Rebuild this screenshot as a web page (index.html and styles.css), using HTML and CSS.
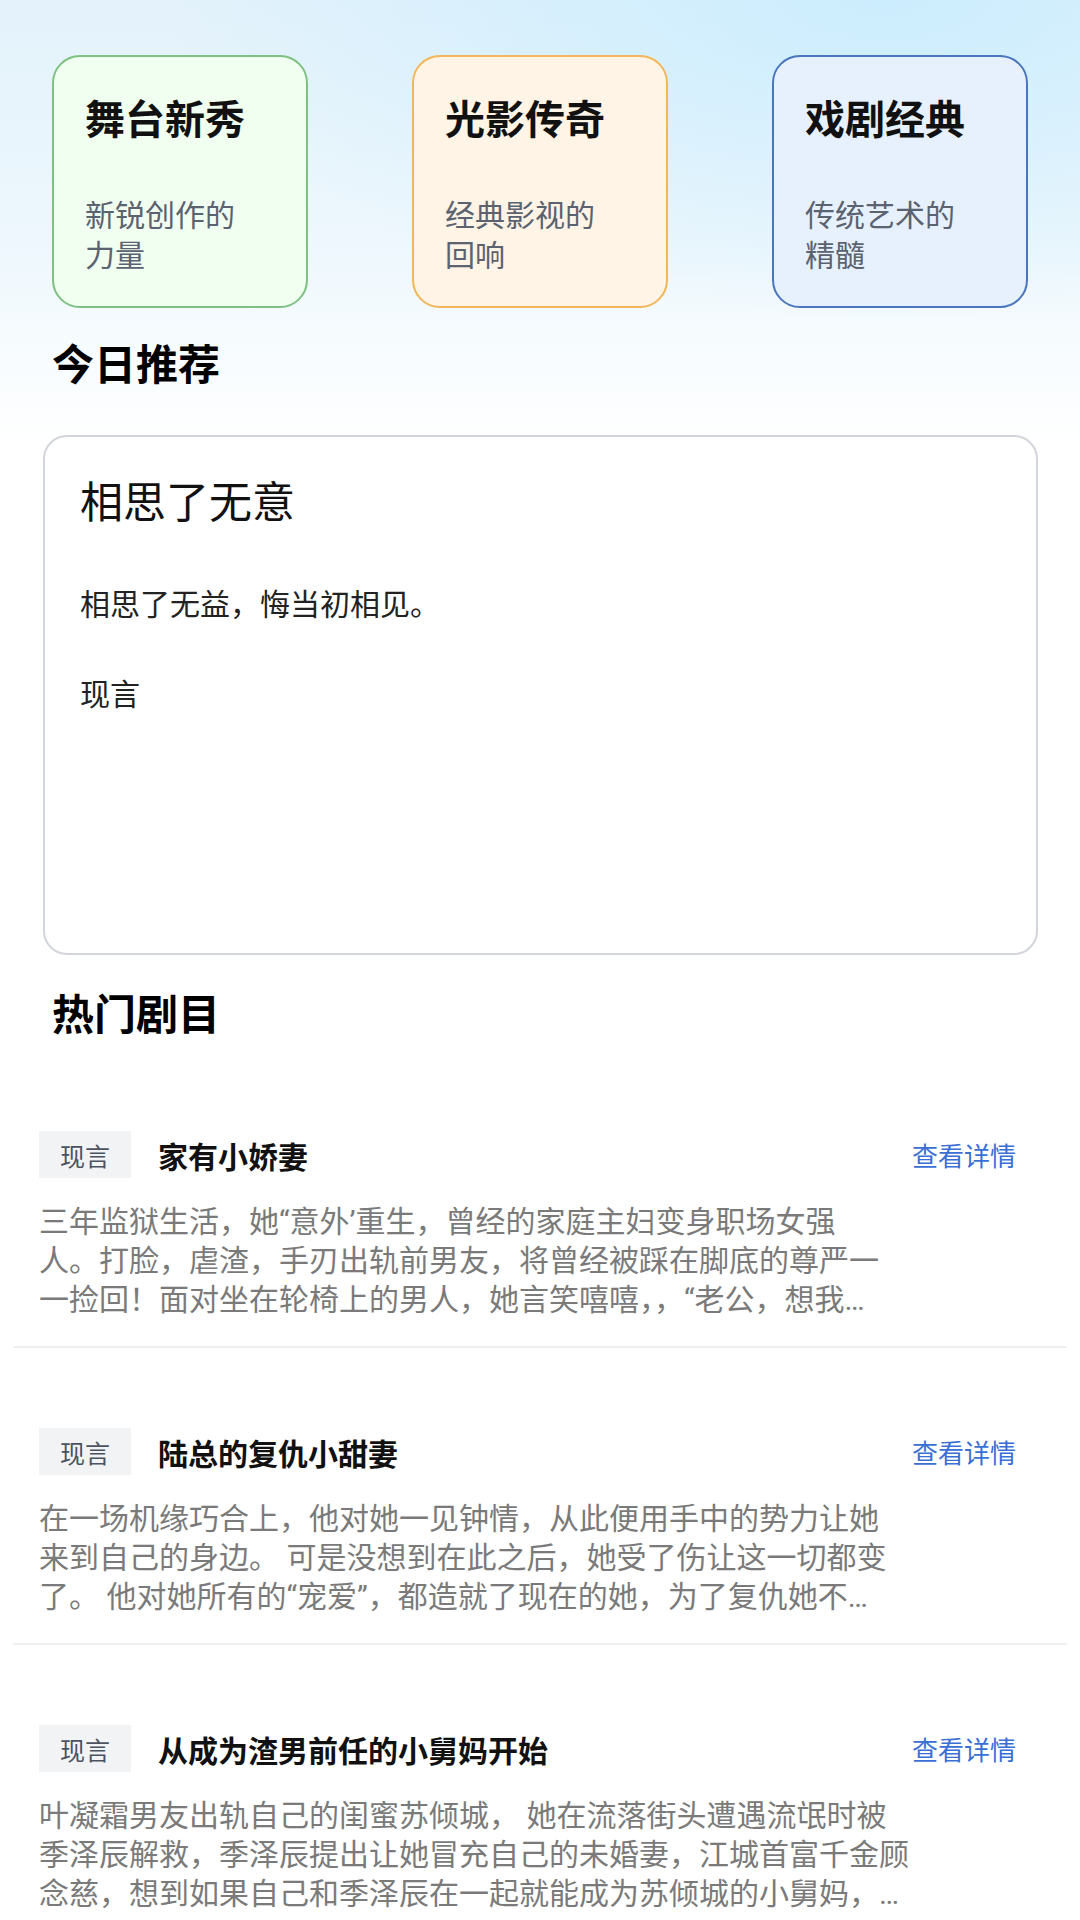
FILE: index.html
```html
<!DOCTYPE html>
<html lang="zh-CN">
<head>
<meta charset="utf-8">
<title>剧目</title>
<link rel="stylesheet" href="styles.css">
</head>
<body>
<div class="page">
  <section class="categories">
    <div class="cat cat-green">
      <div class="cat-title">舞台新秀</div>
      <div class="cat-sub">新锐创作的<br>力量</div>
    </div>
    <div class="cat cat-orange">
      <div class="cat-title">光影传奇</div>
      <div class="cat-sub">经典影视的<br>回响</div>
    </div>
    <div class="cat cat-blue">
      <div class="cat-title">戏剧经典</div>
      <div class="cat-sub">传统艺术的<br>精髓</div>
    </div>
  </section>

  <h2 class="section-title rec-heading">今日推荐</h2>
  <section class="rec-card">
    <div class="rec-title">相思了无意</div>
    <div class="rec-text">相思了无益，悔当初相见。</div>
    <div class="rec-tag">现言</div>
  </section>

  <h2 class="section-title hot-heading">热门剧目</h2>
  <section class="list">
    <div class="item">
      <div class="item-head">
        <span class="tag">现言</span>
        <span class="item-title">家有小娇妻</span>
        <span class="more">查看详情</span>
      </div>
      <p class="desc">三年监狱生活，她“意外’重生，曾经的家庭主妇变身职场女强<br>人。打脸，虐渣，手刃出轨前男友，将曾经被踩在脚底的尊严一<br>一捡回！面对坐在轮椅上的男人，她言笑嘻嘻，，“老公，想我…</p>
    </div>
    <div class="item">
      <div class="item-head">
        <span class="tag">现言</span>
        <span class="item-title">陆总的复仇小甜妻</span>
        <span class="more">查看详情</span>
      </div>
      <p class="desc">在一场机缘巧合上，他对她一见钟情，从此便用手中的势力让她<br>来到自己的身边。 可是没想到在此之后，她受了伤让这一切都变<br>了。 他对她所有的“宠爱”，都造就了现在的她，为了复仇她不…</p>
    </div>
    <div class="item">
      <div class="item-head">
        <span class="tag">现言</span>
        <span class="item-title">从成为渣男前任的小舅妈开始</span>
        <span class="more">查看详情</span>
      </div>
      <p class="desc">叶凝霜男友出轨自己的闺蜜苏倾城， 她在流落街头遭遇流氓时被<br>季泽辰解救，季泽辰提出让她冒充自己的未婚妻，江城首富千金顾<br>念慈，想到如果自己和季泽辰在一起就能成为苏倾城的小舅妈，…</p>
    </div>
  </section>
</div>
</body>
</html>
```

FILE: styles.css
```css
* {
  box-sizing: border-box;
}

html, body {
  margin: 0;
  padding: 0;
  background: #ffffff;
}

body {
  font-family: Roboto, "Noto Sans CJK SC", sans-serif;
  color: #111111;
  width: 1080px;
  min-height: 1920px;
  overflow: hidden;
}

.page {
  min-height: 1920px;
  background:
    radial-gradient(ellipse 720px 320px at 82% 0%, rgba(200, 236, 254, 0.85) 0%, rgba(200, 236, 254, 0) 100%),
    linear-gradient(180deg, #e3f2fb 0px, #edf7fd 240px, #f8fcfe 360px, #ffffff 450px);
  background-repeat: no-repeat;
}

/* ---------- categories ---------- */
.categories {
  display: flex;
  justify-content: space-between;
  padding: 55px 52px 0;
}

.cat {
  width: 256px;
  height: 253px;
  border: 2px solid;
  border-radius: 28px;
  padding: 40px 20px 0 31px;
}

.cat-green {
  background: #f0fff0;
  border-color: #7fc182;
}

.cat-orange {
  background: #fff4e5;
  border-color: #f3b658;
}

.cat-blue {
  background: #e6f1fd;
  border-color: #4a76bd;
}

.cat-title {
  font-size: 40px;
  font-weight: 700;
  line-height: 48px;
  color: #111111;
}

.cat-sub {
  margin-top: 51px;
  font-size: 30px;
  line-height: 40px;
  color: #5b6270;
}

/* ---------- section titles ---------- */
.section-title {
  margin: 0;
  padding-left: 52px;
  font-size: 42px;
  font-weight: 700;
  line-height: 50px;
  color: #000000;
}

.rec-heading {
  margin-top: 33px;
}

.hot-heading {
  margin-top: 36px;
}

/* ---------- recommendation card ---------- */
.rec-card {
  margin: 44px 42px 0 43px;
  height: 520px;
  border: 2px solid #d3d5dc;
  border-radius: 24px;
  background: #ffffff;
  padding: 40px 34px 0 35px;
}

.rec-title {
  font-size: 43px;
  line-height: 52px;
  color: #111111;
}

.rec-text {
  margin-top: 56px;
  font-size: 30px;
  line-height: 40px;
  color: #222222;
}

.rec-tag {
  margin-top: 50px;
  font-size: 30px;
  line-height: 40px;
  color: #222222;
}

/* ---------- hot list ---------- */
.list {
  margin: 10px 13px 0;
}

.item {
  padding: 80px 26px 27px;
  border-bottom: 2px solid #f0f0f2;
}

.item:last-child {
  border-bottom: none;
}

.item-head {
  display: flex;
  align-items: center;
  height: 47px;
}

.tag {
  width: 92px;
  height: 47px;
  display: flex;
  align-items: center;
  justify-content: center;
  background: #f2f3f5;
  font-size: 25px;
  color: #4b5362;
}

.item-title {
  margin-left: 27px;
  font-size: 30px;
  font-weight: 700;
  color: #111111;
}

.more {
  margin-left: auto;
  margin-right: 25px;
  font-size: 26px;
  color: #3a6fd6;
}

.desc {
  margin: 24px 0 0;
  width: 880px;
  font-size: 30px;
  line-height: 39px;
  color: #7a7a7a;
  white-space: nowrap;
  overflow: hidden;
}
```
